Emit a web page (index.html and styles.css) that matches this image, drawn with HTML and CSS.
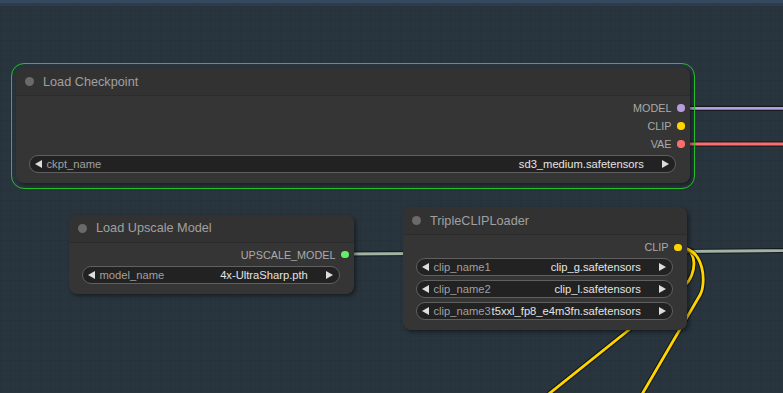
FILE: index.html
```html
<!DOCTYPE html>
<html lang="en">
<head>
<meta charset="utf-8">
<title>Node graph</title>
<link rel="stylesheet" href="styles.css">
</head>
<body>
<div class="canvas">
  <div class="topline"></div>
  <svg class="wires" width="783" height="393" viewBox="0 0 783 393" xmlns="http://www.w3.org/2000/svg">
    <g fill="none" stroke-linecap="round">
      <path class="wire-shadow" d="M681 108.3 L790 108.3"/>
      <path class="wire" stroke="#b39ddb" d="M681 108.3 L790 108.3"/>
      <path class="wire-shadow" d="M681 144 L790 144"/>
      <path class="wire" stroke="#ff6e6e" d="M681 144 L790 144"/>
      <path class="wire-shadow" d="M345 254 C500 254 600 251 790 250.5"/>
      <path class="wire" stroke="#a3b3a3" d="M345 254 C500 254 600 251 790 250.5"/>
      <path class="wire-shadow" d="M678 247 C700 247 696 276 685 285 L530 409"/>
      <path class="wire" stroke="#ffd500" d="M678 247 C700 247 696 276 685 285 L530 409"/>
      <path class="wire-shadow" d="M678 247 C706 248 706 285 700 295 L634 408"/>
      <path class="wire" stroke="#ffd500" d="M678 247 C706 248 706 285 700 295 L634 408"/>
    </g>
  </svg>

  <div class="node node-ckpt">
    <div class="sel-outline"></div>
    <div class="node-title"><span class="title-dot"></span><span class="title-text">Load Checkpoint</span></div>
    <div class="node-body">
      <div class="outputs">
        <div class="out"><span class="out-label">MODEL</span><span class="slot slot-model"></span></div>
        <div class="out"><span class="out-label">CLIP</span><span class="slot slot-clip"></span></div>
        <div class="out"><span class="out-label">VAE</span><span class="slot slot-vae"></span></div>
      </div>
      <div class="widgets">
        <div class="widget"><span class="arr arr-l"></span><span class="w-label">ckpt_name</span><span class="w-value">sd3_medium.safetensors</span><span class="arr arr-r"></span></div>
      </div>
    </div>
  </div>

  <div class="node node-upscale">
    <div class="node-title"><span class="title-dot"></span><span class="title-text">Load Upscale Model</span></div>
    <div class="node-body">
      <div class="outputs">
        <div class="out"><span class="out-label">UPSCALE_MODEL</span><span class="slot slot-upscale"></span></div>
      </div>
      <div class="widgets">
        <div class="widget"><span class="arr arr-l"></span><span class="w-label">model_name</span><span class="w-value">4x-UltraSharp.pth</span><span class="arr arr-r"></span></div>
      </div>
    </div>
  </div>

  <div class="node node-triple">
    <div class="node-title"><span class="title-dot"></span><span class="title-text">TripleCLIPLoader</span></div>
    <div class="node-body">
      <div class="outputs">
        <div class="out"><span class="out-label">CLIP</span><span class="slot slot-clip"></span></div>
      </div>
      <div class="widgets">
        <div class="widget"><span class="arr arr-l"></span><span class="w-label">clip_name1</span><span class="w-value">clip_g.safetensors</span><span class="arr arr-r"></span></div>
        <div class="widget"><span class="arr arr-l"></span><span class="w-label">clip_name2</span><span class="w-value">clip_l.safetensors</span><span class="arr arr-r"></span></div>
        <div class="widget"><span class="arr arr-l"></span><span class="w-label">clip_name3</span><span class="w-value">t5xxl_fp8_e4m3fn.safetensors</span><span class="arr arr-r"></span></div>
      </div>
    </div>
  </div>
</div>
</body>
</html>
```

FILE: styles.css
```css
* { box-sizing: border-box; }

html, body {
  margin: 0;
  padding: 0;
  background: #29353e;
}

.canvas {
  position: relative;
  width: 783px;
  height: 393px;
  overflow: hidden;
  font-family: "Liberation Sans", Arial, sans-serif;
  background-color: #29353e;
  background-image:
    linear-gradient(rgba(0, 0, 0, 0.05) 1px, transparent 1px),
    linear-gradient(90deg, rgba(0, 0, 0, 0.05) 1px, transparent 1px);
  background-size: 10px 10px;
}

.topline {
  position: absolute;
  left: 0;
  top: 0;
  width: 100%;
  height: 6px;
  background: linear-gradient(#34495e 0, #34495e 3px, #2d3c48 3px, #2d3c48 6px);
}

.wires {
  position: absolute;
  left: 0;
  top: 0;
}

.wire-shadow {
  stroke: rgba(0, 0, 0, 0.55);
  stroke-width: 5;
}

.wire {
  stroke-width: 2.8;
}

.node {
  position: absolute;
  background: #353535;
  border-radius: 8px;
  box-shadow: 2px 2px 4px rgba(0, 0, 0, 0.45);
  display: flex;
  flex-direction: column;
}

.node-ckpt { left: 16px; top: 68px; width: 674px; }
.node-upscale { left: 69px; top: 214.5px; width: 285px; }
.node-triple { left: 403px; top: 207.3px; width: 284px; }

.sel-outline {
  position: absolute;
  left: -5px;
  top: -5px;
  right: -5px;
  bottom: -6px;
  border: 1.4px solid #27bf27;
  border-radius: 13px;
  pointer-events: none;
}

.node-title {
  height: 28px;
  display: flex;
  align-items: center;
  gap: 9.5px;
  padding-left: 8.5px;
  background: #323232;
  border-radius: 8px 8px 0 0;
  border-bottom: 1px solid #2c2c2c;
}

.title-dot {
  width: 9px;
  height: 9px;
  border-radius: 50%;
  background: #6a6a6a;
  flex-shrink: 0;
}

.title-text {
  font-size: 12.7px;
  color: #a0a0a0;
  white-space: nowrap;
}

.node-body {
  display: flex;
  flex-direction: column;
  padding: 3px 0 10px;
}

.outputs {
  display: flex;
  flex-direction: column;
  margin-bottom: 2px;
}

.out {
  height: 18px;
  display: flex;
  align-items: center;
  justify-content: flex-end;
  gap: 5.5px;
  padding-right: 5.5px;
}

.out-label {
  font-size: 10.8px;
  color: #aaaaaa;
  white-space: nowrap;
}

.slot {
  width: 7.5px;
  height: 7.5px;
  border-radius: 50%;
  flex-shrink: 0;
}

.slot-model { background: #b39ddb; }
.slot-clip { background: #ffd500; }
.slot-vae { background: #ff6e6e; }
.slot-upscale { background: #66ee66; }

.widgets {
  display: flex;
  flex-direction: column;
  gap: 4px;
  padding: 0 14px 0 13px;
}

.widget {
  height: 18px;
  display: flex;
  align-items: center;
  padding: 0 5.7px 0 5px;
  background: #222222;
  border: 1px solid #606060;
  border-radius: 9px;
  font-size: 11.2px;
  white-space: nowrap;
}

.arr {
  width: 0;
  height: 0;
  border-top: 4px solid transparent;
  border-bottom: 4px solid transparent;
  flex-shrink: 0;
}

.arr-l {
  border-right: 7.5px solid #dddddd;
  margin-right: 4.5px;
}

.arr-r {
  border-left: 7.5px solid #dddddd;
  margin-left: 18.5px;
}

.w-label {
  color: #a0a0a0;
  flex-shrink: 0;
}

.w-value {
  color: #e4e4e4;
  margin-left: auto;
  flex-shrink: 0;
}
```
